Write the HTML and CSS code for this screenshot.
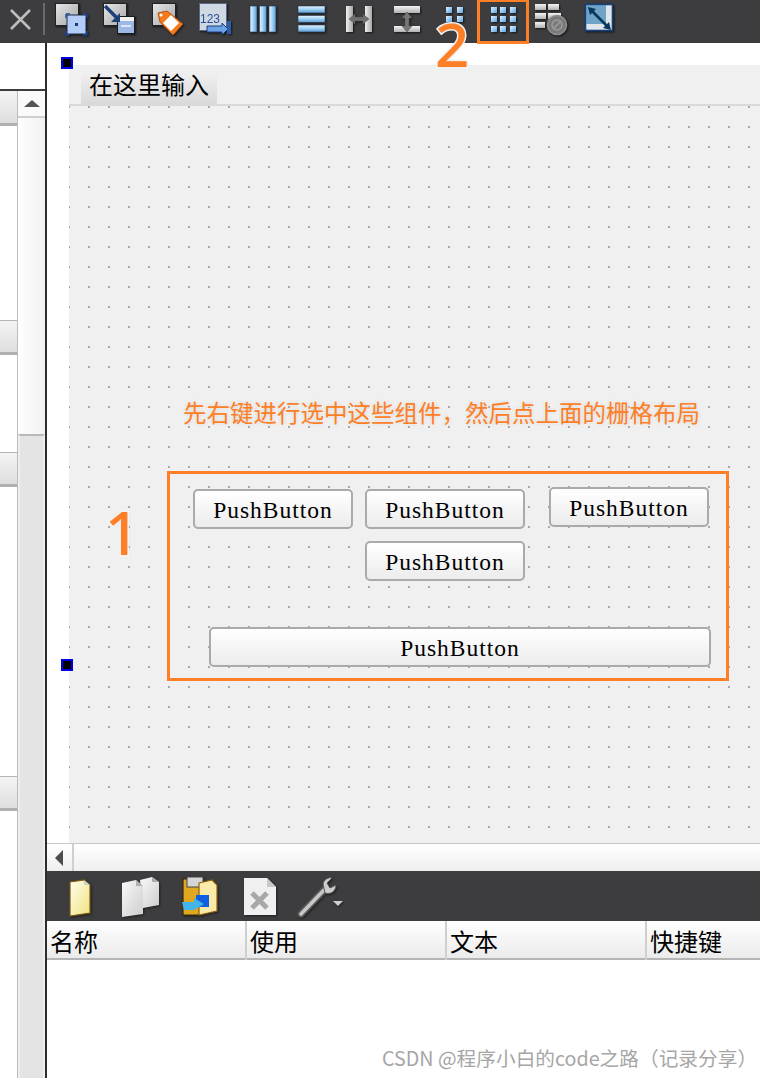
FILE: index.html
```html
<!DOCTYPE html>
<html lang="zh">
<head>
<meta charset="utf-8">
<title>Qt Designer</title>
<link rel="stylesheet" href="styles.css">
</head>
<body>
<div class="app">
  <header class="topbar">
    <svg class="close" width="44" height="43" viewBox="0 0 44 43"><path d="M9 10 L28 29 M28 10 L9 29" stroke="#bdbdbd" stroke-width="2.6" fill="none"/><rect x="41" y="3" width="2" height="32" fill="#6a6a6a"/></svg>
    <svg class="tool" viewBox="0 0 48 43"><defs>
      <linearGradient id="g" x1="0" y1="0" x2="1" y2="1"><stop offset="0" stop-color="#e8e8e8"/><stop offset="1" stop-color="#a4a4a4"/></linearGradient>
      <linearGradient id="bv" x1="0" y1="0" x2="1" y2="0"><stop offset="0" stop-color="#e6f4ff"/><stop offset=".5" stop-color="#9fd0f5"/><stop offset="1" stop-color="#5a9ad0"/></linearGradient>
      <linearGradient id="bh" x1="0" y1="0" x2="0" y2="1"><stop offset="0" stop-color="#e6f4ff"/><stop offset=".5" stop-color="#9fd0f5"/><stop offset="1" stop-color="#5a9ad0"/></linearGradient>
      <linearGradient id="gv" x1="0" y1="0" x2="1" y2="0"><stop offset="0" stop-color="#f0f0f0"/><stop offset="1" stop-color="#a8a8a8"/></linearGradient>
      <linearGradient id="gh" x1="0" y1="0" x2="0" y2="1"><stop offset="0" stop-color="#f4f4f4"/><stop offset="1" stop-color="#b0b0b0"/></linearGradient>
      <linearGradient id="sq" x1="0" y1="0" x2="1" y2="1"><stop offset="0" stop-color="#dff1ff"/><stop offset="1" stop-color="#5aa6e6"/></linearGradient>
      <linearGradient id="doc" x1="0" y1="0" x2="1" y2="1"><stop offset="0" stop-color="#fffef0"/><stop offset="1" stop-color="#f0e27c"/></linearGradient>
      <linearGradient id="pg" x1="0" y1="0" x2="1" y2="1"><stop offset="0" stop-color="#fafafa"/><stop offset="1" stop-color="#cdcdcd"/></linearGradient>
    </defs>
      <rect x="9.5" y="3.5" width="23" height="22" fill="url(#g)" stroke="#222"/>
      <rect x="21" y="15" width="19" height="19" fill="#b4cdf8" stroke="#1d2a44"/>
      <rect x="29" y="23" width="3" height="3" fill="#1c3a78"/>
      <path d="M20 14h4M37 14h4M20 35h4M37 35h4M20 14v4M41 14v4M20 31v4M41 31v4" stroke="#1f4a9a" stroke-width="1.4"/>
    </svg>
    <svg class="tool" viewBox="0 0 48 43">
      <rect x="9.5" y="3.5" width="23" height="22" fill="url(#g)" stroke="#222"/>
      <rect x="23.5" y="16.5" width="17" height="17" fill="#9db8e4" stroke="#1a1a1a"/>
      <rect x="24" y="17" width="16" height="4" fill="#f2f2f2"/>
      <rect x="27" y="25" width="10" height="2" fill="#dfe8f8"/>
      <path d="M11 6 L24 19" stroke="#1d3f7a" stroke-width="3.4"/>
      <path d="M26 13 L26 22 L17 22 Z" fill="#1d3f7a"/>
    </svg>
    <svg class="tool" viewBox="0 0 48 43">
      <rect x="10.5" y="3.5" width="23" height="22" fill="url(#g)" stroke="#222"/>
      <path d="M16 13 L25 11 L41 24 L31 35 L18 22 Z" fill="#f47a1c" stroke="#b6560e"/>
      <path d="M29 15 L37 23 L29 31 L21 23 Z" fill="#fff"/>
      <circle cx="19" cy="15" r="1.5" fill="#fff"/>
    </svg>
    <svg class="tool" viewBox="0 0 48 43">
      <rect x="9.5" y="3.5" width="27" height="27" fill="#cfd9e4" stroke="#5a6a86"/>
      <text class="nums" x="10" y="23">123</text>
      <path d="M17 26 H32 V23 L38 29 L32 35 V32 H17 Z" fill="#6fa3e6" stroke="#1d3f7a"/>
      <rect x="37" y="21" width="4" height="13" fill="#2a5ca8"/>
    </svg>
    <svg class="tool" viewBox="0 0 48 43">
      <rect x="12" y="6" width="7" height="26" fill="url(#bv)" stroke="#2a3a4e" stroke-width=".6"/>
      <rect x="21.5" y="6" width="7" height="26" fill="url(#bv)" stroke="#2a3a4e" stroke-width=".6"/>
      <rect x="31" y="6" width="7" height="26" fill="url(#bv)" stroke="#2a3a4e" stroke-width=".6"/>
    </svg>
    <svg class="tool" viewBox="0 0 48 43">
      <rect x="12" y="6" width="27" height="7" fill="url(#bh)" stroke="#2a3a4e" stroke-width=".6"/>
      <rect x="12" y="15.5" width="27" height="7" fill="url(#bh)" stroke="#2a3a4e" stroke-width=".6"/>
      <rect x="12" y="25" width="27" height="7" fill="url(#bh)" stroke="#2a3a4e" stroke-width=".6"/>
    </svg>
    <svg class="tool" viewBox="0 0 48 43">
      <rect x="12" y="6" width="7" height="26" fill="url(#gv)"/>
      <rect x="31" y="6" width="7" height="26" fill="url(#gv)"/>
      <path d="M15 19 L21 14 V17 H29 V14 L35 19 L29 24 V21 H21 V24 Z" fill="#6f6f6f" stroke="#555" stroke-width=".5"/>
    </svg>
    <svg class="tool" viewBox="0 0 48 43">
      <rect x="12" y="6" width="26" height="7" fill="url(#gh)"/>
      <rect x="12" y="26" width="26" height="6" fill="url(#gh)"/>
      <path d="M25 12 L30 18 H27 V26 H30 L25 32 L20 26 H23 V18 H20 Z" fill="#777" stroke="#555" stroke-width=".5"/>
    </svg>
    <svg class="tool" viewBox="0 0 48 43">
      <rect x="16" y="7" width="6" height="6" fill="url(#sq)"/><rect x="27" y="7" width="6" height="6" fill="url(#sq)"/>
      <rect x="16" y="16" width="6" height="6" fill="url(#sq)"/><rect x="27" y="16" width="6" height="6" fill="url(#sq)"/>
    </svg>
    <svg class="tool" viewBox="0 0 48 43">
      <rect x="13" y="7" width="6" height="6" fill="url(#sq)"/><rect x="22" y="7" width="6" height="6" fill="url(#sq)"/><rect x="32" y="7" width="6" height="6" fill="url(#sq)"/>
      <rect x="13" y="16" width="6" height="6" fill="url(#sq)"/><rect x="22" y="16" width="6" height="6" fill="url(#sq)"/><rect x="32" y="16" width="6" height="6" fill="url(#sq)"/>
      <rect x="13" y="26" width="6" height="6" fill="url(#sq)"/><rect x="22" y="26" width="6" height="6" fill="url(#sq)"/><rect x="32" y="26" width="6" height="6" fill="url(#sq)"/>
    </svg>
    <svg class="tool" viewBox="0 0 48 43">
      <rect x="9" y="4" width="11" height="6" fill="url(#gh)"/><rect x="22" y="4" width="11" height="6" fill="url(#gh)"/>
      <rect x="9" y="13" width="11" height="6" fill="url(#gh)"/><rect x="22" y="13" width="13" height="6" fill="url(#gh)"/>
      <rect x="9" y="22" width="10" height="6" fill="url(#gh)"/>
      <circle cx="31" cy="25" r="9.5" fill="#7a7a7a" stroke="#8e8e8e" stroke-width="1.6"/>
      <path d="M27 29 L35 21" stroke="#9c9c9c" stroke-width="1.6"/>
      <circle cx="31" cy="25" r="5" fill="none" stroke="#9c9c9c" stroke-width="1.4"/>
    </svg>
    <svg class="tool" viewBox="0 0 48 43">
      <rect x="11.5" y="4.5" width="27" height="26" fill="#dfe6ea" stroke="#17407e" stroke-width="1.6"/>
      <path d="M12 5 H32 V24 H12 Z" fill="#3f86b8" opacity=".7"/>
      <path d="M17 10 L34 27" stroke="#07375a" stroke-width="2.6"/>
      <path d="M14 7 L22 9 L16 15 Z M37 30 L29 28 L35 22 Z" fill="#07375a"/>
    </svg>
  </header>

  <div class="workspace">
    <aside class="sidebar">
      <div class="side-top"></div>
      <div class="side-body">
        <div class="sections">
          <div class="section"></div>
          <div class="section section-2"></div>
          <div class="section section-3"></div>
          <div class="section section-4"></div>
        </div>
        <div class="vscroll">
          <div class="vscroll-up"><span class="tri-up"></span></div>
          <div class="vscroll-track"></div>
          <div class="vscroll-handle"></div>
        </div>
      </div>
    </aside>

    <main class="main">
      <section class="stage">
        <div class="form">
          <div class="menubar"><div class="menuitem">在这里输入</div></div>
          <div class="grid">
            <button class="pb pb-1">PushButton</button>
            <button class="pb pb-2">PushButton</button>
            <button class="pb pb-3">PushButton</button>
            <button class="pb pb-4">PushButton</button>
            <button class="pb pb-5">PushButton</button>
          </div>
        </div>
        <i class="handle handle-top"></i>
        <i class="handle handle-bottom"></i>
      </section>

      <div class="hscroll"><div class="hscroll-left"><span class="tri-left"></span></div></div>

      <div class="actionbar">
        <svg class="atool" viewBox="0 0 60 50">
          <path d="M20 11 L34 9 L40 14 L40 42 L20 45 Z" fill="url(#doc)" stroke="#7a5a10" stroke-width="1.2"/>
          <path d="M34 9 L34 14 L40 14 Z" fill="#cfcfcf"/>
        </svg>
        <svg class="atool" viewBox="0 0 60 50">
          <path d="M30 9 L42 6 L49 11 L49 34 L33 37 Z" fill="url(#pg)"/>
          <path d="M42 6 V11 H49 Z" fill="#aaa"/>
          <path d="M12 12 L26 9 L33 15 L33 43 L12 46 Z" fill="url(#pg)"/>
          <path d="M26 9 V15 H33 Z" fill="#b0b0b0"/>
        </svg>
        <svg class="atool" viewBox="0 0 60 50">
          <rect x="13" y="8" width="20" height="36" rx="1" fill="#e0a820" stroke="#3a2a08" stroke-width="1.2"/>
          <rect x="17" y="6" width="16" height="10" fill="#d6d6d6" stroke="#444"/>
          <path d="M29 12 L42 9 L47 14 L47 40 L29 44 Z" fill="#fbe9a8" stroke="#8a6210" stroke-width="1.2"/>
          <rect x="26" y="24" width="13" height="12" fill="#0f60e0"/>
          <path d="M12 31 H24 V27 L34 33 L24 39 H14 Z" fill="#43b4ea"/>
        </svg>
        <svg class="atool" viewBox="0 0 60 50">
          <path d="M14 7 H37 L46 16 V44 H14 Z" fill="#f0f0f0"/>
          <path d="M37 7 V16 H46 Z" fill="#c8c8c8"/>
          <path d="M22 22 L37 37 M37 22 L22 37" stroke="#a8a8a8" stroke-width="5"/>
        </svg>
        <svg class="atool" viewBox="0 0 60 50">
          <path d="M11 43 L35 18" stroke="#5a5a5a" stroke-width="7" stroke-linecap="round"/>
          <path d="M11 43 L35 18" stroke="#c8c8c8" stroke-width="3.6" stroke-linecap="round"/>
          <path d="M33 13 C34 8 39 6 42 7 L37 12 L40 17 L46 14 C46 20 41 24 35 22 Z" fill="#cfcfcf" stroke="#555"/>
          <path d="M43 30 H53 L48 35 Z" fill="#cfcfcf"/>
        </svg>
      </div>

      <div class="thead">
        <div class="th">名称</div>
        <div class="th">使用</div>
        <div class="th">文本</div>
        <div class="th">快捷键</div>
      </div>
      <div class="tbody"></div>
    </main>
  </div>

  <div class="mark-frame mark-layout"></div>
  <div class="mark-frame mark-tool"></div>
  <div class="mark-num mark-one">1</div>
  <div class="mark-num mark-two">2</div>
  <div class="mark-note">先右键进行选中这些组件，然后点上面的栅格布局</div>
  <div class="watermark">CSDN @程序小白的code之路（记录分享）</div>
</div>
</body>
</html>
```
FILE: styles.css
```css
* { box-sizing: border-box; }
html, body { margin: 0; padding: 0; }
body { width: 760px; height: 1078px; overflow: hidden; background: #fff; font-family: "Noto Sans CJK SC", "Liberation Sans", sans-serif; color: #000; }
.app { position: relative; width: 760px; height: 1078px; display: flex; flex-direction: column; overflow: hidden; }

/* top toolbar */
.topbar { height: 43px; flex: none; background: #3d3d3f; display: flex; align-items: flex-start; padding-left: 2px; }
.close { flex: none; width: 44px; height: 43px; }
.tool { flex: none; width: 48px; height: 43px; filter: drop-shadow(1px 1px 1px rgba(0,0,0,.65)); }
.nums { font: 12px "Liberation Sans", sans-serif; fill: #2b4f96; }

.workspace { flex: 1; display: flex; min-height: 0; }

/* left dock */
.sidebar { width: 45px; flex: none; display: flex; flex-direction: column; }
.side-top { height: 48px; flex: none; border-bottom: 2px solid #3d3d3f; }
.side-body { flex: 1; display: flex; min-height: 0; }
.sections { width: 17px; flex: none; display: flex; flex-direction: column; }
.section { height: 35px; flex: none; background: linear-gradient(#f4f4f4, #dedede); border-top: 1px solid #f0f0f0; border-bottom: 3px solid #b0b0b0; }
.section-2 { margin-top: 194px; border-top: 1px solid #b4b4b4; }
.section-3 { margin-top: 97px; border-top: 1px solid #b4b4b4; }
.section-4 { margin-top: 289px; border-top: 1px solid #b4b4b4; }
.vscroll { flex: 1; display: flex; flex-direction: column; border-left: 1px solid #bcbcbc; }
.vscroll-up { height: 27px; flex: none; background: #fafafa; border-bottom: 2px solid #cfcfcf; display: flex; align-items: center; justify-content: center; }
.tri-up { width: 0; height: 0; border-left: 8px solid transparent; border-right: 8px solid transparent; border-bottom: 7px solid #555; }
.vscroll-track { height: 316px; flex: none; background: linear-gradient(90deg, #fff, #f0f0f0); }
.vscroll-handle { flex: 1; background: #e4e4e4; border-top: 2px solid #b8b8b8; border-left: 2px solid #eee; border-right: 2px solid #eee; }

/* main area */
.main { flex: 1; display: flex; flex-direction: column; min-width: 0; border-left: 2px solid #2d2d2d; }
.stage { position: relative; height: 800px; flex: none; padding: 22px 0 0 22px; background: #fff; }
.form { height: 778px; display: flex; flex-direction: column; background: #f0f0f0; }
.menubar { height: 41px; flex: none; padding-left: 12px; border-bottom: 2px solid #d9d9d9; display: flex; }
.menuitem { width: 136px; padding-left: 8px; font-size: 24px; line-height: 37px; background: linear-gradient(#f0f0f0 20%, #d9d9d9); white-space: nowrap; }
.grid { position: relative; flex: 1; background-image: conic-gradient(at 2px 2px, transparent 75%, #a9a9a9 0); background-size: 20px 20px; background-position: -1px 0; }

/* placed freely on the form's grid canvas */
.pb { position: absolute; width: 160px; height: 40px; padding: 2px 0 0; border: 2px solid #aaa; border-radius: 5px; background: linear-gradient(#fff, #ececec); font: 23.5px/34px "Liberation Serif", serif; letter-spacing: 1px; color: #000; text-align: center; }
.pb-1 { left: 124px; top: 383px; }
.pb-2 { left: 296px; top: 383px; }
.pb-3 { left: 480px; top: 381px; }
.pb-4 { left: 296px; top: 435px; }
.pb-5 { left: 140px; top: 521px; width: 502px; }

.handle { position: absolute; width: 12px; height: 12px; left: 14px; background: #000; border: 2px solid #0000e6; }
.handle-top { top: 14px; }
.handle-bottom { top: 616px; }

.hscroll { height: 28px; flex: none; background: linear-gradient(#fff, #efefef); border-top: 1px solid #c8c8c8; }
.hscroll-left { width: 27px; height: 27px; border-right: 2px solid #cfcfcf; display: flex; align-items: center; padding-left: 8px; }
.tri-left { width: 0; height: 0; border-top: 8px solid transparent; border-bottom: 8px solid transparent; border-right: 8px solid #4d4d4d; }

.actionbar { height: 50px; flex: none; background: #3d3d3f; display: flex; padding-left: 3px; }
.atool { flex: none; width: 60px; height: 50px; filter: drop-shadow(1px 1px 1px rgba(0,0,0,.5)); }

.thead { height: 39px; flex: none; display: grid; grid-template-columns: 200px 200px 200px 1fr; background: linear-gradient(#fff, #ebebeb); border-bottom: 2px solid #b5b5b5; }
.th { font-size: 24px; line-height: 40px; padding-left: 3px; border-right: 2px solid #cfcfcf; white-space: nowrap; }
.th:last-child { border-right: 0; }
.tbody { flex: 1; background: #fff; }

/* annotations drawn over the screenshot */
.mark-frame { position: absolute; border: 3px solid #ff7f27; }
.mark-layout { left: 167px; top: 471px; width: 562px; height: 210px; }
.mark-tool { left: 477px; top: -1px; width: 52px; height: 45px; }
.mark-num { position: absolute; font-family: "Noto Sans", sans-serif; font-weight: 500; font-size: 60px; line-height: 60px; color: #ff7f27; -webkit-text-stroke: 3px #fff; paint-order: stroke fill; text-shadow: 0 0 3px rgba(120,120,120,.35); }
.mark-one { left: 105px; top: 502px; }
.mark-two { left: 435px; top: 14px; }
.mark-note { position: absolute; left: 183px; top: 396px; font-size: 23.5px; line-height: 32px; white-space: nowrap; color: #ff7f27; -webkit-text-stroke: 2px rgba(255,255,255,.75); paint-order: stroke fill; text-shadow: 0 0 3px rgba(150,150,150,.5); }
.watermark { position: absolute; left: 382px; top: 1044px; width: 378px; font-family: "Noto Sans CJK SC", "Liberation Sans", sans-serif; font-size: 19.7px; line-height: 28px; color: #a6a6a6; white-space: nowrap; }
```
